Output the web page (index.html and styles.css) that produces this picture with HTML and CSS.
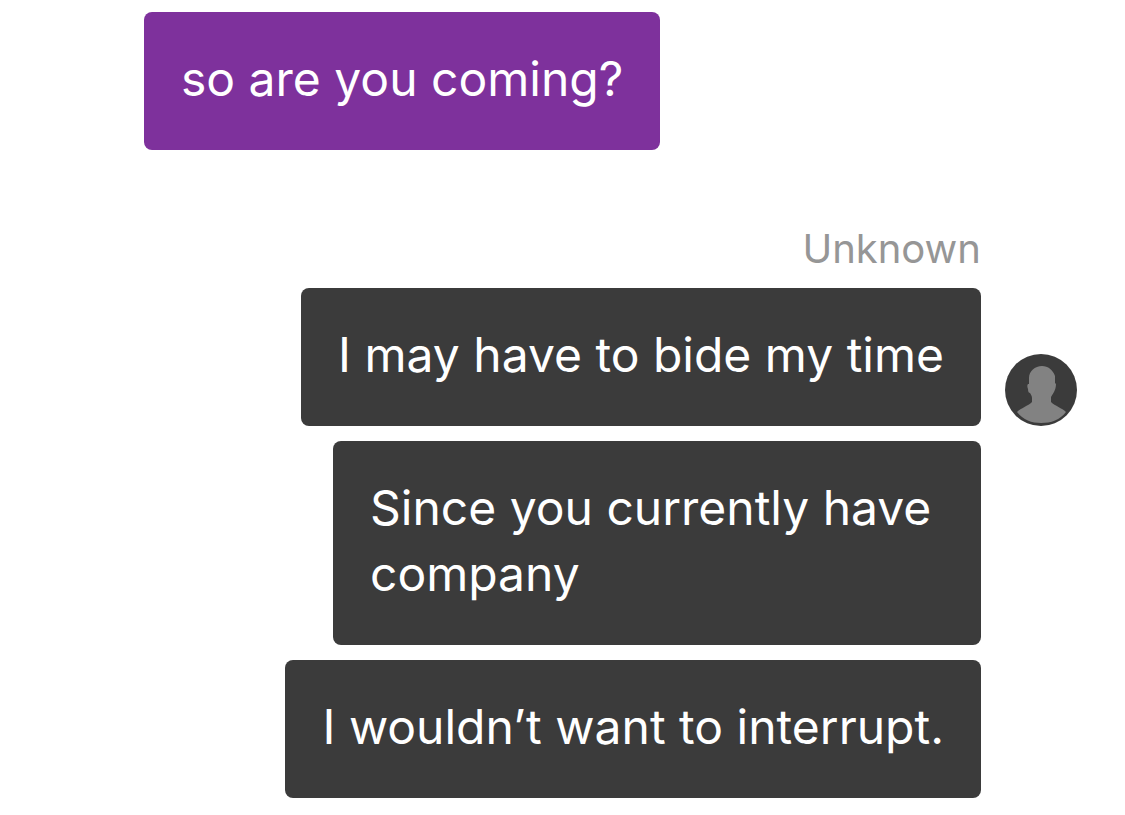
FILE: index.html
```html
<!DOCTYPE html>
<html lang="en">
<head>
    <meta charset="UTF-8">
    <meta name="viewport" content="width=device-width, initial-scale=1.0">
    <title>Messages</title>
    <link rel="stylesheet" href="styles.css">
</head>
<body>
    <main class="chat">
        <div class="bubble sent">so are you coming?</div>

        <section class="received">
            <div class="sender">Unknown</div>
            <div class="message">
                <div class="bubble">I may have to bide my time</div>
                <svg class="avatar" viewBox="0 0 72 72" role="img" aria-label="Unknown">
                    <circle cx="36" cy="36" r="36" fill="#3b3b3b"/>
                    <path fill="#828282" d="M37 12C30 12 24 17 24 24L24 30C22 30 22 32 23 35C23 38 24 39 25 39C26 41 27 42 27 44V48C23 52 16 54 12 58C18 66 27 69 36 69C46 69 55 66 61 58C57 54 50 52 46 48V43C47 41 48 40 49 38C50 36 51 33 51 30L50 29V22C48 16 43 12 37 12Z"/>
                </svg>
            </div>
            <div class="bubble long">Since you currently have company</div>
            <div class="bubble">I wouldn’t want to interrupt.</div>
        </section>
    </main>
</body>
</html>
```
FILE: styles.css
```css
* {
    margin: 0;
    padding: 0;
    box-sizing: border-box;
}

body {
    background-color: #fff;
    font-family: Inter, 'Liberation Sans', sans-serif;
}

/* Conversation column */
.chat {
    display: flex;
    flex-direction: column;
    gap: 75px;
    padding: 12px 144px 17px;
}

.bubble {
    padding: 34px 37px 38px;
    border-radius: 8px;
    background-color: #3b3b3b;
    color: #fff;
    font-size: 48px;
    line-height: 66px;
}

.sent {
    align-self: flex-start;
    background-color: #7e319c;
}

/* Messages from the other person */
.received {
    display: flex;
    flex-direction: column;
    align-items: flex-end;
    gap: 15px;
}

/* Text that wraps onto more lines */
.long {
    max-width: 648px;
}

.sender {
    color: #969696;
    font-size: 40px;
    line-height: 48px;
}

/* The avatar hangs in the margin beside the bubble */
.message {
    display: flex;
    align-items: flex-end;
    gap: 24px;
    margin-right: -96px;
}

.avatar {
    flex: none;
    width: 72px;
    height: 72px;
}
```
